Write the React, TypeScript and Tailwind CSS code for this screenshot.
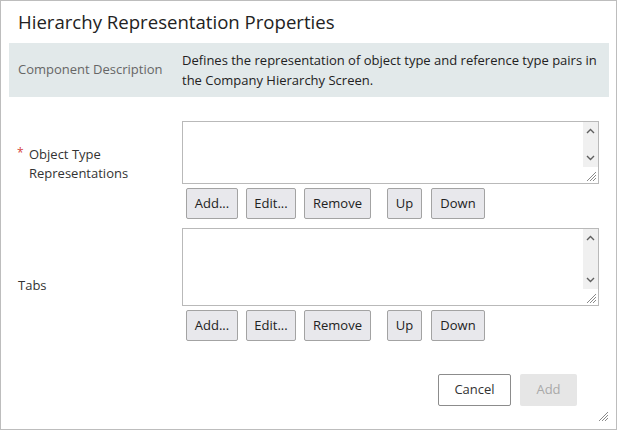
import React from 'react';

const font = { fontFamily: '"Segoe UI", "Open Sans", "Noto Sans", sans-serif' };

function Grip({ className }: { className?: string }) {
  return (
    <svg className={className} width="12" height="12" viewBox="0 0 12 12">
      <path d="M11 2 L2 11 M11 5 L5 11 M11 8 L8 11" stroke="#8a8a8a" strokeWidth="1" fill="none" />
    </svg>
  );
}

function ListBox({ height }: { height: string }) {
  return (
    <div className={`flex ${height} border border-[#b9b9b9] bg-white`}>
      <div className="flex-1" />
      <div className="flex w-[15px] flex-col">
        <div className="flex flex-1 flex-col items-center justify-between bg-[#f0f0f0] py-[6px]">
          <svg width="9" height="6" viewBox="0 0 9 6">
            <path d="M1 5 L4.5 1.5 L8 5" stroke="#5f5f5f" strokeWidth="1.4" fill="none" />
          </svg>
          <svg width="9" height="6" viewBox="0 0 9 6">
            <path d="M1 1 L4.5 4.5 L8 1" stroke="#5f5f5f" strokeWidth="1.4" fill="none" />
          </svg>
        </div>
        <div className="flex h-[16px] items-end justify-end">
          <Grip className="mb-[1px] mr-[1px]" />
        </div>
      </div>
    </div>
  );
}

function Btn({ children, w }: { children: React.ReactNode; w: string }) {
  return (
    <button className={`${w} h-[31px] rounded-[2px] border border-[#a3a3a3] bg-[#e8e8ec] text-[13px] text-[#222]`}>
      {children}
    </button>
  );
}

function ButtonRow() {
  return (
    <div className="ml-[4px] mt-[4px] flex gap-[8px]">
      <Btn w="w-[52px]">Add...</Btn>
      <Btn w="w-[50px]">Edit...</Btn>
      <Btn w="w-[67px]">Remove</Btn>
      <div className="ml-[8px] flex gap-[9px]">
        <Btn w="w-[35px]">Up</Btn>
        <Btn w="w-[54px]">Down</Btn>
      </div>
    </div>
  );
}

export default function App() {
  return (
    <div style={font} className="relative flex h-[430px] w-[617px] flex-col border border-[#bdbdbd] bg-white text-[#222]">
      <h1 className="px-[17px] pt-[7px] text-[18.6px] leading-[28px] text-[#222]">
        Hierarchy Representation Properties
      </h1>

      {/* Description band */}
      <div className="ml-[8px] mr-[7px] mt-[7px] flex h-[54px] items-center bg-[#e2e9ea]">
        <div className="w-[173px] pl-[9px] text-[13px] text-[#666]">Component Description</div>
        <div className="w-[420px] text-[13px] leading-[20px] text-[#222]">
          Defines the representation of object type and reference type pairs in the Company Hierarchy Screen.
        </div>
      </div>

      {/* Object Type Representations */}
      <div className="mt-[24px] flex">
        <div className="flex w-[181px] items-center pb-[13px] pl-[16px]">
          <div className="flex">
            <span className="relative top-[-2px] w-[12px] text-[12px] leading-[19px] text-[#d43f3a]">*</span>
            <div className="text-[13px] leading-[19px] text-[#333]">
              Object Type
              <br />
              Representations
            </div>
          </div>
        </div>
        <div className="w-[417px]">
          <ListBox height="h-[63px]" />
          <ButtonRow />
        </div>
      </div>

      {/* Tabs */}
      <div className="mt-[9px] flex">
        <div className="flex w-[181px] items-center pl-[17px] pt-[3px] text-[13px] text-[#333]">Tabs</div>
        <div className="w-[417px]">
          <ListBox height="h-[78px]" />
          <ButtonRow />
        </div>
      </div>

      {/* Footer */}
      <div className="mr-[39px] mt-[33px] flex justify-end gap-[9px]">
        <button className="h-[32px] w-[73px] rounded-[2px] border border-[#8c8c8c] bg-white text-[13px] text-[#333]">
          Cancel
        </button>
        <button className="h-[32px] w-[57px] rounded-[2px] bg-[#e6e6e6] text-[13px] text-[#a9a9a9]">Add</button>
      </div>

      <Grip className="absolute bottom-[7px] right-[7px]" />
    </div>
  );
}
